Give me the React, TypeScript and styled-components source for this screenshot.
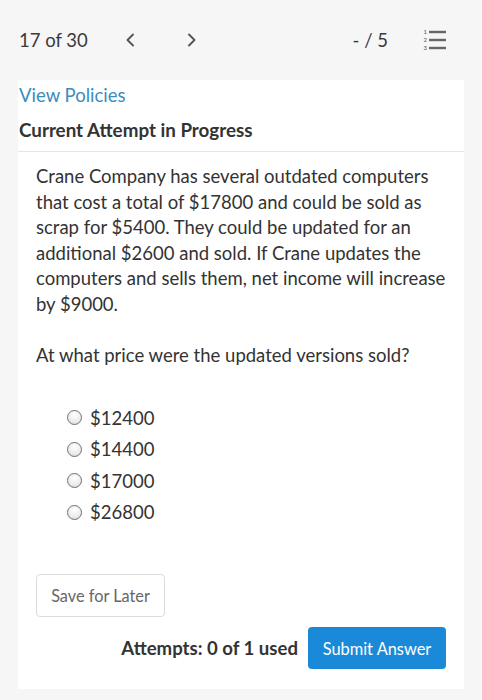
import React from "react";
import styled, { createGlobalStyle } from "styled-components";

const Global = createGlobalStyle`
  html, body { margin: 0; padding: 0; background: #f6f6f6; }
  body { font-family: Lato, "Open Sans", Arial, sans-serif; color: #333; -webkit-font-smoothing: antialiased; }
`;

const Page = styled.div`
  width: 482px;
  height: 700px;
  padding: 0 18px;
  box-sizing: border-box;
  background: #f6f6f6;
  overflow: hidden;
`;

const Header = styled.div`
  height: 80px;
  display: flex;
  align-items: center;
  padding: 0 17px 0 1px;
  color: #3a3a3a;
  font-size: 18.5px;
`;

const Counter = styled.span`
  margin-right: 36px;
`;

const NavButton = styled.span<{ $gap?: number }>`
  display: inline-flex;
  align-items: center;
  margin-right: ${(p) => p.$gap ?? 0}px;
  color: #555;
`;

const Score = styled.span`
  margin-left: auto;
  margin-right: 35px;
`;

const Card = styled.div`
  background: #fff;
  padding: 0 18px 20px 0;
`;

const PolicyLink = styled.a`
  display: block;
  padding-left: 1px;
  line-height: 30px;
  font-size: 18.5px;
  color: #3a8dc0;
  text-decoration: none;
`;

const Title = styled.div`
  margin-right: -18px;
  padding: 6px 0 7px 1px;
  line-height: 28px;
  font-size: 18.8px;
  font-weight: 700;
  color: #333;
  border-bottom: 1px solid #e6e6e6;
`;

const Question = styled.div`
  padding: 12px 0 0 18px;
  font-size: 18.5px;
  line-height: 25.6px;
  color: #333;
  p { margin: 0 0 25.6px; }
  p:last-child { margin-bottom: 0; }
`;

const Options = styled.div`
  display: flex;
  flex-direction: column;
  padding: 33px 0 0 49px;
`;

const Option = styled.label`
  display: flex;
  align-items: center;
  height: 31.6px;
  font-size: 18.5px;
  color: #333;
`;

const Radio = styled.span`
  box-sizing: border-box;
  width: 15px;
  height: 15px;
  border-radius: 50%;
  border: 1px solid #6f6f6f;
  background: radial-gradient(circle at 50% 30%, #ffffff 0%, #ececec 60%, #d2d2d2 100%);
  margin-right: 8px;
  flex-shrink: 0;
`;

const SaveRow = styled.div`
  padding: 46px 0 0 18px;
`;

const SaveButton = styled.button`
  width: 129px;
  height: 43px;
  border: 1px solid #dcdcdc;
  border-radius: 4px;
  background: #fff;
  color: #666;
  font-family: inherit;
  font-size: 16.3px;
`;

const SubmitRow = styled.div`
  display: flex;
  justify-content: flex-end;
  align-items: center;
  gap: 10px;
  padding-top: 10px;
`;

const Attempts = styled.span`
  font-size: 18.6px;
  font-weight: 700;
  color: #333;
`;

const SubmitButton = styled.button`
  width: 138px;
  height: 42px;
  border: none;
  border-radius: 4px;
  background: #1a8ad8;
  color: #fff;
  font-family: inherit;
  font-size: 16.4px;
`;

const Chevron = ({ dir }: { dir: "left" | "right" }) => (
  <svg width="12" height="16" viewBox="0 0 12 16">
    <path
      d={dir === "left" ? "M9 2.5 L3.5 8 L9 13.5" : "M3 2.5 L8.5 8 L3 13.5"}
      fill="none"
      stroke="#555"
      strokeWidth="1.9"
      strokeLinecap="round"
      strokeLinejoin="round"
    />
  </svg>
);

const ListIcon = () => (
  <svg width="24" height="22" viewBox="0 0 24 22">
    <g stroke="#666" strokeWidth="2.4" strokeLinecap="butt">
      <line x1="6" y1="3" x2="23" y2="3" />
      <line x1="6" y1="11" x2="23" y2="11" />
      <line x1="6" y1="19" x2="23" y2="19" />
    </g>
    <g fill="#555" fontSize="6" fontFamily="Lato, Arial, sans-serif">
      <text x="0.5" y="5">1</text>
      <text x="0.5" y="13">2</text>
      <text x="0.5" y="21">3</text>
    </g>
  </svg>
);

const options = ["$12400", "$14400", "$17000", "$26800"];

export default function App() {
  return (
    <>
      <Global />
      <Page>
        <Header>
          <Counter>17 of 30</Counter>
          <NavButton $gap={50}>
            <Chevron dir="left" />
          </NavButton>
          <NavButton>
            <Chevron dir="right" />
          </NavButton>
          <Score>- / 5</Score>
          <ListIcon />
        </Header>
        <Card>
          <PolicyLink href="#">View Policies</PolicyLink>
          <Title>Current Attempt in Progress</Title>
          <Question>
            <p>
              Crane Company has several outdated computers that cost a total of $17800 and could be sold as
              scrap for $5400. They could be updated for an additional $2600 and sold. If Crane updates the
              computers and sells them, net income will increase by $9000.
            </p>
            <p>At what price were the updated versions sold?</p>
          </Question>
          <Options>
            {options.map((o) => (
              <Option key={o}>
                <Radio />
                {o}
              </Option>
            ))}
          </Options>
          <SaveRow>
            <SaveButton>Save for Later</SaveButton>
          </SaveRow>
          <SubmitRow>
            <Attempts>Attempts: 0 of 1 used</Attempts>
            <SubmitButton>Submit Answer</SubmitButton>
          </SubmitRow>
        </Card>
      </Page>
    </>
  );
}
